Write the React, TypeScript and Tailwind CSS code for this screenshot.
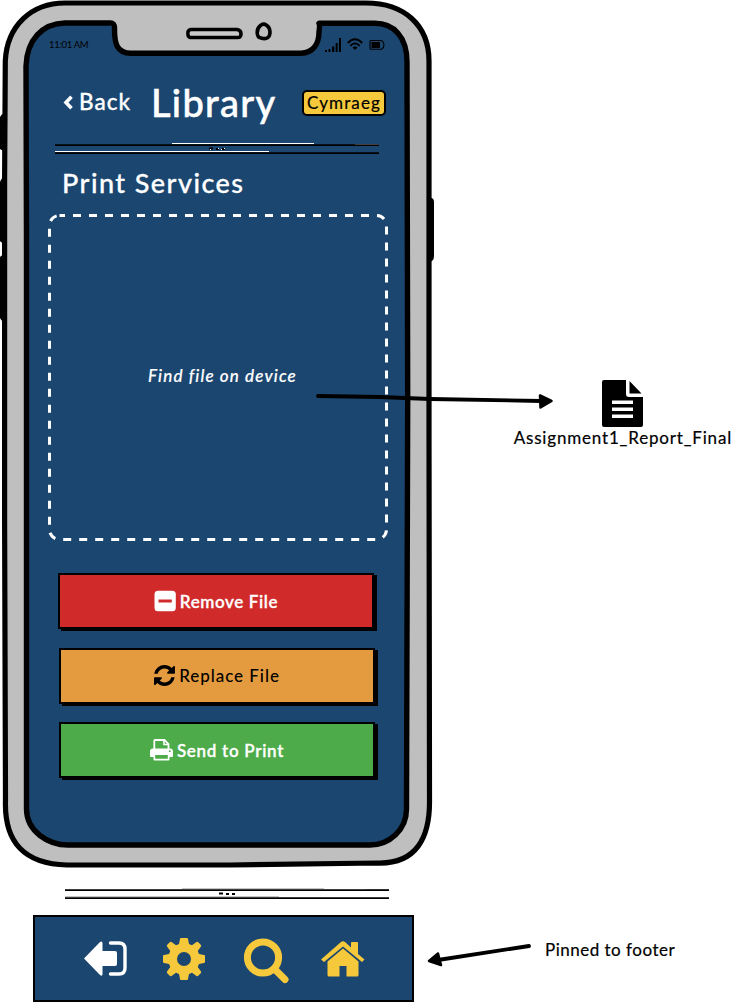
import React from "react";

function DeviceFrame() {
  return (
    <svg className="absolute inset-0" width="440" height="870" viewBox="0 0 440 870" fill="none" aria-hidden="true">
      <path d="M0 117q2-4 5-3v38l-5-3zM0 182q2-5 5-4v63q-3 3-5 0zM0 257q2-3 5-1v66q-3 0-5-4zM428 198q6-1 6 4v54q0 6-6 6z" fill="#000" />
      <path d="M5.300 61C7 26 31 3 65 3H366C404 3 429 25 429 61V430L429.500 800C430 838 416 864 378 863L230 865H67C25 864 4 843 5.500 800L4.600 520V180z" fill="#bfbfbf" stroke="#000" strokeWidth="5.200" strokeLinejoin="round" />
      <path d="M26 66C27 40 42 23.500 65 23H109Q115 22 114.500 29C114.500 42 116 53.300 131 53.300H301C313 53 319 44 319 32Q320 25 319 23.300H374C394 23 407 37 407 62L407.700 400L406.500 808C407 830 389 845 370 845H68C49 845 26 832 26.500 808V250z" fill="#1b4670" stroke="#000" strokeWidth="5.400" strokeLinejoin="round" />
      <path d="M191 29.500Q187 30 188 35Q188 38 193 37.500H237Q241 38 241 34Q241 30 237 29.500z" stroke="#000" strokeWidth="3.600" fill="#c9c9c9" />
      <path d="M260.500 25.500C256 29 256 37 261 38C267 40 270 37 270 32C270 26 264 22 260.500 25.500z" stroke="#000" strokeWidth="3.600" />
    </svg>
  );
}

function StatusIcons() {
  return (
    <svg width="61" height="15" viewBox="0 0 61 15" aria-hidden="true">
      <path d="M0 12h2v2H0zM3.500 11h2v3h-2zM7 8.500h2.300V14H7zM10.700 5h2V14h-2zM14 0h2v14h-2z" fill="#000" />
      <path d="M22.800 5Q30-2.500 37.200 5M25.300 7.800Q30 3 34.700 7.800" fill="none" stroke="#000" strokeWidth="1.900" />
      <path d="M27.500 9.500Q30 7.500 32.500 9.500L30 12z" />
      <path d="M46 2.500H56.500Q59 4 59 7T56.500 11.300H46Q45 11.300 45 10V3.500Q45 2.500 46 2.500z" fill="none" stroke="#000" strokeWidth="1.100" />
      <path d="M46.500 4h8.500v6h-8.500z" />
    </svg>
  );
}

function Divider({ onDark = false }: { onDark?: boolean }) {
  const glint = onDark ? "#fff" : "#c4c4c4";
  return (
    <svg width="324" height="12" viewBox="0 0 324 12" className="block" aria-hidden="true">
      <path d="M117 .5H259M300 1.500H324M0 8.500H214" stroke={glint} />
      <path d="M0 2.200H324M0 10.200H324" stroke="#000" strokeWidth="1.800" />
      <path d="M154 5.500h4M161 6h3M167 6h3" stroke="#000" strokeWidth="2.200" />
      {onDark && <path d="M155 6.500h1M163 5.500h1M166 6.500h1M169 5.500h1" stroke="#fff" />}
    </svg>
  );
}

function MinusSquare() {
  return (
    <svg width="22" height="22" viewBox="0 0 22 22" className="shrink-0" aria-hidden="true">
      <rect x=".5" y=".7" width="21.300" height="20.600" rx="3.500" fill="#fff" />
      <path d="M4.500 11h13.300" stroke="#d02a2a" strokeWidth="3" />
    </svg>
  );
}

function Refresh() {
  return (
    <svg width="21" height="21" viewBox="0 0 1536 1536" className="shrink-0" aria-hidden="true">
      <path d="M1511 928q0 5-1 7-64 268-268 434.500t-478 166.500q-146 0-282.500-55t-243.500-157l-129 129q-19 19-45 19t-45-19-19-45v-448q0-26 19-45t45-19h448q26 0 45 19t19 45-19 45l-137 137q71 66 161 102t187 36q134 0 250-65t186-179q11-17 53-117 8-23 30-23h192q13 0 22.500 9.500t9.500 22.500zm25-800v448q0 26-19 45t-45 19h-448q-26 0-45-19t-19-45 19-45l138-138q-148-137-349-137-134 0-250 65t-186 179q-11 17-53 117-8 23-30 23h-199q-13 0-22.500-9.500t-9.500-22.500v-7q65-268 270-434.500t480-166.500q146 0 284 55.500t245 156.500l130-129q19-19 45-19t45 19 19 45z" />
    </svg>
  );
}

function Printer() {
  return (
    <svg width="23" height="22" viewBox="0 0 23 22" className="shrink-0" fill="none" aria-hidden="true">
      <path d="M4.300 11V1.700Q4.300 1 5 1H14.500L18.500 5V11" stroke="#fff" strokeWidth="1.800" />
      <path d="M14 1V5.500H18.500" stroke="#fff" strokeWidth="1.600" />
      <path fillRule="evenodd" d="M3 9.500H20Q23 9.500 23 12.500V17Q23 18 22 18H19.500V20.500Q19.500 21.500 18.500 21.500H4.500Q3.500 21.500 3.500 20.500V18H1Q0 18 0 17V12.500Q0 9.500 3 9.500zM5.200 16V19.800H17.800V16zM19.800 11.300a.9.900 0 1 0 .1 1.800a.9.900 0 0 0-.1-1.800z" fill="#fff" />
    </svg>
  );
}

function FileIcon() {
  return (
    <svg width="41" height="47" viewBox="0 0 41 47" aria-hidden="true">
      <path d="M2 0H24V14Q24 17 27 17H41V45Q41 47 39 47H2Q0 47 0 45V2Q0 0 2 0zM27.500 1L39.500 13.500H27.500z" />
      <path d="M10 22.200H31M10 29.200H31M10 36.200H31" stroke="#fff" strokeWidth="3.600" />
    </svg>
  );
}

function ExitIcon() {
  return (
    <svg width="43" height="36" viewBox="0 0 43 36" aria-hidden="true">
      <path d="M0 17.500L16 1Q18.500-.5 18.500 2.500V10H31Q33 10 33 12V23Q33 25 31 25H18.500V33Q18.500 36 16 34z" fill="#fff" />
      <path d="M26.500 2H35Q41 2 41 8V27Q41 33 35 33H26.500" fill="none" stroke="#fff" strokeWidth="3.400" strokeLinecap="round" />
    </svg>
  );
}

function Gear() {
  return (
    <svg width="42" height="42" viewBox="0 0 42 42" aria-hidden="true">
      <path fillRule="evenodd" d="M18 0H24Q25 0 25 1L26 6L29 7.300L33.500 4Q34.500 3.500 35.300 4.300L37.700 6.700Q38.500 7.500 38 8.500L34.700 13L36 16L41 17Q42 17.200 42 18V24Q42 25 41 25L36 26L34.700 29L38 33.500Q38.500 34.500 37.700 35.300L35.300 37.700Q34.500 38.500 33.500 38L29 34.700L26 36L25 41Q25 42 24 42H18Q17 42 17 41L16 36L13 34.700L8.500 38Q7.500 38.500 6.700 37.700L4.300 35.300Q3.500 34.500 4 33.500L7.300 29L6 26L1 25Q0 25 0 24V18Q0 17 1 17L6 16L7.300 13L4 8.500Q3.500 7.500 4.300 6.700L6.700 4.300Q7.500 3.500 8.500 4L13 7.300L16 6L17 1Q17 0 18 0zM21 14a7 7 0 1 0 0 14a7 7 0 0 0 0-14z" fill="#f6c93c" />
    </svg>
  );
}

function SearchIcon() {
  return (
    <svg width="46" height="46" viewBox="0 0 46 46" fill="none" stroke="#f6c93c" aria-hidden="true">
      <circle cx="20" cy="19.500" r="15.600" strokeWidth="7" />
      <path d="M31.500 31L42 41.500" strokeWidth="7" strokeLinecap="round" />
    </svg>
  );
}

function HomeIcon() {
  return (
    <svg width="44" height="36" viewBox="0 0 44 36" fill="#f6c93c" aria-hidden="true">
      <path d="M20 1Q22-.5 24 1L30 6.500V2Q30 1 31 1H36Q37 1 37 2V13L43.500 18.500L41 21L22 5.500L3 21L0 18.500z" />
      <path d="M22 7.500L37.500 20.500V34Q37.500 35.500 36 35.500H25.500V25H18.500V35.500H8Q6.500 35.500 6.500 34V20.500z" />
    </svg>
  );
}

const actionClass =
  "flex h-[56px] w-[316px] items-center justify-center gap-1 border-2 border-black text-[17px] leading-none whitespace-nowrap shadow-[3px_2px_0_#000]";

export default function App() {
  return (
    <div className="relative flex h-[1003px] w-[732px] overflow-hidden bg-white font-['Lato',sans-serif] text-black">
      <div className="w-[440px] shrink-0">
        <main className="relative h-[870px]">
          <DeviceFrame />
          <div className="relative flex flex-col">
            <div className="flex h-[60px] items-start justify-between pr-[54px] pl-[49px]">
              <span className="mt-[38px] text-[9.5px] leading-[13px] tracking-[-0.3px]">11:01 AM</span>
              <div className="mt-[38px]"><StatusIcons /></div>
            </div>
            <header className="flex h-[83px] items-center pt-[2px] pl-[62px]">
              <button className="flex h-[30px] w-[89px] items-center gap-[6px] text-[22.5px] font-medium leading-none tracking-[1px] text-white [-webkit-text-stroke:0.3px]">
                <svg width="11" height="15" viewBox="0 0 11 15" className="shrink-0" aria-hidden="true">
                  <path d="M9.500 1.700L4 7.500L9.500 13.300" fill="none" stroke="#fff" strokeWidth="3.600" />
                </svg>
                Back
              </button>
              <h1 className="w-[151px] pb-px text-[38px] font-medium leading-none tracking-[1.300px] text-white [-webkit-text-stroke:0.5px]">Library</h1>
              <button className="flex h-[26px] w-[84px] items-center justify-center rounded-[5px] border-2 border-black bg-[#f6c93c] text-[17px] leading-none tracking-[1.1px] [-webkit-text-stroke:0.2px]">Cymraeg</button>
            </header>
            <div className="pl-[55px]"><Divider onDark /></div>
            <h2 className="mt-[12px] pl-[62px] text-[27px] font-medium leading-[32px] tracking-[1.45px] text-white [-webkit-text-stroke:0.3px]">Print Services</h2>
            <section className="relative mt-[15px] ml-[48px] flex h-[327px] w-[340px] items-center justify-center">
              <svg className="absolute inset-0" width="340" height="327" fill="none" aria-hidden="true">
                <path d="M11.500 1.500H328.500A10 10 0 0 1 338.500 11.500V315.500A10 10 0 0 1 328.500 325.500H11.500A10 10 0 0 1 1.500 315.500V11.500A10 10 0 0 1 11.500 1.500" stroke="#fff" strokeWidth="3" strokeDasharray="8 8" strokeDashoffset="2.500" />
              </svg>
              <span className="pb-[4px] pl-[9px] text-[17px] font-medium leading-none tracking-[1.15px] text-white italic [-webkit-text-stroke:0.2px]">Find file on device</span>
            </section>
            <div className="mt-[32px] ml-[58px] flex flex-col gap-[18.500px]">
              <button className={`${actionClass} bg-[#d02a2a] font-semibold tracking-[0.6px] text-white [-webkit-text-stroke:0.3px]`}><MinusSquare />Remove File</button>
              <button className={`${actionClass} ml-px bg-[#e49b3f] font-medium tracking-[0.95px] text-black`}><Refresh />Replace File</button>
              <button className={`${actionClass} ml-px bg-[#4dab49] font-semibold tracking-[0.7px] text-white [-webkit-text-stroke:0.3px]`}><Printer />Send to Print</button>
            </div>
          </div>
        </main>
        <footer className="pt-[18px] pl-[33px]">
          <div className="ml-[32px]"><Divider /></div>
          <nav className="mt-[15px] flex h-[87px] w-[381px] items-center border-[2.500px] border-black bg-[#1b4670] pl-[49px]">
            <button className="w-[79px]"><ExitIcon /></button>
            <button className="w-[80px]"><Gear /></button>
            <button className="mt-[4px] w-[78px]"><SearchIcon /></button>
            <button><HomeIcon /></button>
          </nav>
        </footer>
      </div>
      <aside className="flex w-[292px] shrink-0 flex-col">
        <figure className="mt-[380px] flex flex-col items-center self-end">
          <FileIcon />
          <figcaption className="mt-px text-[17px] leading-[20px] tracking-[0.82px] whitespace-nowrap [-webkit-text-stroke:0.2px]">Assignment1_Report_Final</figcaption>
        </figure>
        <p className="mt-[492px] ml-[105px] text-[17px] leading-[20px] tracking-[0.5px] whitespace-nowrap [-webkit-text-stroke:0.2px]">Pinned to footer</p>
      </aside>
      <svg className="pointer-events-none absolute inset-0" width="732" height="1003" fill="none" stroke="#000" strokeLinecap="round" strokeLinejoin="round" aria-hidden="true">
        <path d="M318 396L380 397L430 399L541 401" strokeWidth="3.800" />
        <path d="M540 395.500L551.500 401L540.500 407.500z" fill="#000" strokeWidth="2.500" />
        <path d="M529 946L438 960" strokeWidth="3.800" />
        <path d="M438 953.500L429 961L441 965z" fill="#000" strokeWidth="2.500" />
      </svg>
    </div>
  );
}
